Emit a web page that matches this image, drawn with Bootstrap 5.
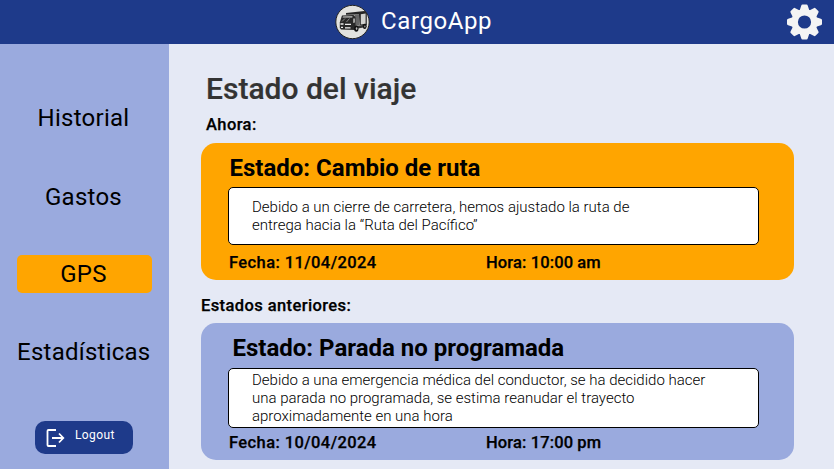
<!DOCTYPE html>
<html lang="es">
<head>
<meta charset="utf-8">
<meta name="viewport" content="width=device-width, initial-scale=1">
<title>CargoApp</title>
<link href="https://cdn.jsdelivr.net/npm/bootstrap@5.3.0/dist/css/bootstrap.min.css" rel="stylesheet">
<style>
body{font-family:Roboto,"Liberation Sans",sans-serif;background:#e5e9f5;color:#000;height:469px;overflow:hidden}
.topbar{height:44px;background:#1e3a8a;padding:0 12px 0 0}
.brand-box{padding-left:335px;gap:11px;color:#fff;font-size:24px;line-height:44px;letter-spacing:.6px}
.brand-box span{margin-top:-2px}
.side{width:169px;height:425px;background:#9aaade;padding:55px 17px 15px}
.side-nav{gap:40px;width:135px}
.side-nav .nav-link{height:38px;padding:0 2px 0 0;color:#000;font-size:24px;line-height:38px;letter-spacing:.25px;text-align:center;white-space:nowrap}
.side-nav .nav-link:nth-child(2){line-height:40px}
.side-nav .nav-link.active{background:#ffa500;border-radius:5px}
.logout{width:98px;height:33px;margin-left:18px;background:#1e3a8a;color:#fff;border:0;border-radius:10px;padding:0 0 0 11px;font-size:12px;letter-spacing:.4px;gap:10px}
.logout:hover{background:#1e3a8a;color:#fff}
.logout span{line-height:14px;margin-top:-5px}
.content{padding:27px 40px 0 32px}
.page-title{font-size:30px;line-height:36px;font-weight:500;color:#333;margin:0 0 8px 5px;-webkit-text-stroke:.2px #333}
.label-text{font-size:16.5px;line-height:20px;font-weight:500;margin:0;letter-spacing:.4px;-webkit-text-stroke:.25px #000}
.label-now{margin-left:5px}
.trip{height:137px;border:0;border-radius:15px;padding:11px 35px 0 27px}
.trip-now{background:#ffa500;margin-top:8px}
.trip-past{background:#9aaade;margin-top:7px;color:#000}
.trip h2{font-size:24px;line-height:28px;font-weight:700;margin:0 0 5px 1.5px}
.trip-past h2{margin-left:4.5px;margin-bottom:6px}
.message{height:58px;border:1px solid #000;border-radius:5px;background:#fff;padding:0 48px 0 23px;font-size:15px;line-height:18px;font-weight:300}
.trip-past .message{height:60px}
.trip-meta{padding-left:1px;margin-top:8px}
.trip-past .trip-meta{margin-top:5px}
.trip-meta span:first-child{width:257px}
.trip-meta span:last-child{letter-spacing:.12px}
</style>
</head>
<body>
<header class="topbar d-flex justify-content-between align-items-center">
  <div class="brand-box d-flex align-items-center">
    <svg width="35" height="36" viewBox="0 0 35 36" aria-hidden="true">
      <circle cx="17.5" cy="18" r="16.7" fill="#e2e2df" stroke="#222" stroke-width="1"/>
      <path d="M11 9L29.5 7L31.8 9V21H24.5L24 10.4L11 10.8Z" fill="#252525"/>
      <path d="M25.8 10.2L30.6 9.6V19.8L25.8 20.6Z" fill="#d2d2cf"/>
      <path d="M19.5 11L24 10.6V21L20 22Z" fill="#666"/>
      <path d="M7 11.5L18.5 11L20.5 13V26L6 25.5L4.8 24V18.5Z" fill="#282828"/>
      <path d="M8 12.5L17.5 12.2L17.3 13.6H7.5Z" fill="#d2d2cf"/>
      <path d="M7 17.5L10 14.5M11.5 18L14.5 14.5" stroke="#888" stroke-width="1"/>
      <path d="M18.3 14.5H19.8V18.5L18.3 19Z" fill="#c8c8c5"/>
      <path d="M5.5 20H8.5M10 20.3H16" stroke="#eee" stroke-width="1.3"/>
      <path d="M6 23.3H8M10 23.8H15.5" stroke="#eee" stroke-width="1.3"/>
      <path d="M20 22L31.5 20.5V23L20 25Z" fill="#333"/>
      <ellipse cx="21.3" cy="24.6" rx="2.2" ry="3.2" fill="#111"/><ellipse cx="29.7" cy="22.4" rx="1.8" ry="2.6" fill="#111"/>
      <ellipse cx="21.6" cy="24.6" rx=".8" ry="1.3" fill="#bbb"/><ellipse cx="29.9" cy="22.4" rx=".6" ry="1" fill="#bbb"/>
    </svg>
    <span>CargoApp</span>
  </div>
  <svg width="35" height="35" viewBox="-17.5 -17 35 35" fill="#f4f4f4" overflow="visible" aria-label="Configuración">
    <defs><path id="tooth" d="M-5 -11L-3.3 -16.3Q-3 -17.5 -2 -17.5H2Q3 -17.5 3.3 -16.3L5 -11Z"/></defs>
    <use href="#tooth"/><use href="#tooth" transform="rotate(45)"/><use href="#tooth" transform="rotate(90)"/><use href="#tooth" transform="rotate(135)"/><use href="#tooth" transform="rotate(180)"/><use href="#tooth" transform="rotate(225)"/><use href="#tooth" transform="rotate(270)"/><use href="#tooth" transform="rotate(315)"/>
    <circle r="9.8" fill="none" stroke="#f4f4f4" stroke-width="6.4"/>
  </svg>
</header>
<div class="d-flex">
  <aside class="side d-flex flex-column justify-content-between flex-shrink-0">
    <nav class="side-nav nav flex-column flex-nowrap">
      <a class="nav-link" href="#">Historial</a>
      <a class="nav-link" href="#">Gastos</a>
      <a class="nav-link active" href="#">GPS</a>
      <a class="nav-link" href="#">Estadísticas</a>
    </nav>
    <button class="logout btn d-flex align-items-center" type="button">
      <svg width="19" height="18" viewBox="0 0 19 18" fill="none" stroke="#fff" stroke-width="1.8" aria-hidden="true"><path d="M10 1H2.5Q1.5 1 1.5 2V16Q1.5 17 2.5 17H10M6 9H17M13 4.5L17.3 9L13 13.5"/></svg>
      <span>Logout</span>
    </button>
  </aside>
  <main class="content flex-grow-1">
    <h1 class="page-title">Estado del viaje</h1>
    <p class="label-text label-now">Ahora:</p>
    <section class="trip trip-now card">
      <h2>Estado: Cambio de ruta</h2>
      <div class="message d-flex align-items-center"><div>Debido a un cierre de carretera, hemos ajustado la ruta de<br>entrega hacia la “Ruta del Pacífico”</div></div>
      <div class="trip-meta label-text d-flex"><span>Fecha: 11/04/2024</span><span>Hora: 10:00 am</span></div>
    </section>
    <p class="label-text mt-3">Estados anteriores:</p>
    <section class="trip trip-past card">
      <h2>Estado: Parada no programada</h2>
      <div class="message d-flex align-items-center"><div>Debido a una emergencia médica del conductor, se ha decidido hacer<br>una parada no programada, se estima reanudar el trayecto<br>aproximadamente en una hora</div></div>
      <div class="trip-meta label-text d-flex"><span>Fecha: 10/04/2024</span><span>Hora: 17:00 pm</span></div>
    </section>
  </main>
</div>
<script src="https://cdn.jsdelivr.net/npm/bootstrap@5.3.0/dist/js/bootstrap.bundle.min.js"></script>
</body>
</html>
